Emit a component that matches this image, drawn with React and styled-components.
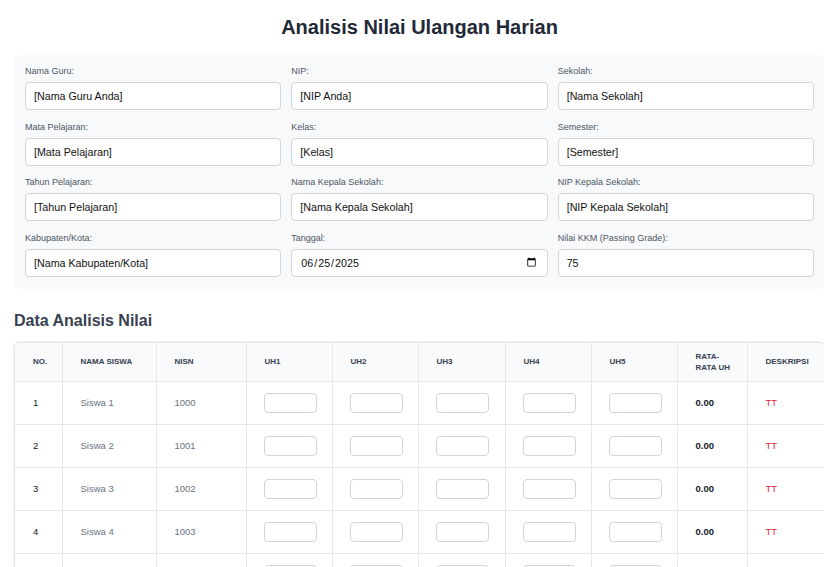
import React from "react";
import styled, { createGlobalStyle } from "styled-components";

const GlobalStyle = createGlobalStyle`
  html, body {
    margin: 0;
    padding: 0;
    background: #ffffff;
    overflow-x: hidden;
  }
  body {
    font-family: "Liberation Sans", Arial, sans-serif;
    color: #1f2937;
  }
`;

const fields = [
  { label: "Nama Guru:", value: "[Nama Guru Anda]" },
  { label: "NIP:", value: "[NIP Anda]" },
  { label: "Sekolah:", value: "[Nama Sekolah]" },
  { label: "Mata Pelajaran:", value: "[Mata Pelajaran]" },
  { label: "Kelas:", value: "[Kelas]" },
  { label: "Semester:", value: "[Semester]" },
  { label: "Tahun Pelajaran:", value: "[Tahun Pelajaran]" },
  { label: "Nama Kepala Sekolah:", value: "[Nama Kepala Sekolah]" },
  { label: "NIP Kepala Sekolah:", value: "[NIP Kepala Sekolah]" },
  { label: "Kabupaten/Kota:", value: "[Nama Kabupaten/Kota]" },
  { label: "Tanggal:", value: "2025-06-25", type: "date" },
  { label: "Nilai KKM (Passing Grade):", value: "75", type: "number" },
];

const columns = [
  { title: "No.", width: 47 },
  { title: "Nama Siswa", width: 94 },
  { title: "NISN", width: 90 },
  { title: "UH1", width: 86 },
  { title: "UH2", width: 86 },
  { title: "UH3", width: 87 },
  { title: "UH4", width: 86 },
  { title: "UH5", width: 86 },
  { title: "Rata-rata UH", width: 70 },
  { title: "Deskripsi", width: 78 },
];

const students = Array.from({ length: 10 }, (_, i) => ({
  no: i + 1,
  name: `Siswa ${i + 1}`,
  nisn: 1000 + i,
}));

function App() {
  return (
    <>
      <GlobalStyle />
      <Page>
        <Title>Analisis Nilai Ulangan Harian</Title>
        <InfoPanel>
          {fields.map((f) => (
            <Field key={f.label}>
              <Label>{f.label}</Label>
              <TextInput type={f.type || "text"} defaultValue={f.value} />
            </Field>
          ))}
        </InfoPanel>

        <SectionTitle>Data Analisis Nilai</SectionTitle>
        <TableWrap>
          <Table>
            <colgroup>
              {columns.map((c) => (
                <col key={c.title} style={{ width: c.width }} />
              ))}
            </colgroup>
            <thead>
              <tr>
                {columns.map((c) => (
                  <HeadCell key={c.title}>{c.title}</HeadCell>
                ))}
              </tr>
            </thead>
            <tbody>
              {students.map((s) => (
                <tr key={s.no}>
                  <Cell>{s.no}</Cell>
                  <Cell muted>{s.name}</Cell>
                  <Cell muted>{s.nisn}</Cell>
                  {[1, 2, 3, 4, 5].map((n) => (
                    <Cell key={n}>
                      <ScoreInput type="text" />
                    </Cell>
                  ))}
                  <Cell bold>0.00</Cell>
                  <Cell danger>TT</Cell>
                </tr>
              ))}
            </tbody>
          </Table>
        </TableWrap>
      </Page>
    </>
  );
}

export default App;

const Page = styled.div`
  width: 811px;
  padding: 0 14px 20px;
`;

const Title = styled.h1`
  margin: 13px 0 14px;
  font-size: 20px;
  line-height: 28px;
  font-weight: 700;
  text-align: center;
  color: #1f2937;
`;

const InfoPanel = styled.div`
  background: #f8f9fa;
  border-radius: 6px;
  padding: 11px 11px 12px;
  display: grid;
  grid-template-columns: repeat(3, 1fr);
  column-gap: 10px;
  row-gap: 11.5px;
`;

const Field = styled.div`
  display: flex;
  flex-direction: column;
`;

const Label = styled.label`
  font-size: 9px;
  line-height: 11px;
  color: #4b5563;
  margin-bottom: 5px;
`;

const TextInput = styled.input`
  box-sizing: border-box;
  height: 28px;
  width: 100%;
  padding: 0 8px;
  border: 1px solid #d1d5db;
  border-radius: 4px;
  background: #ffffff;
  font-family: "Liberation Sans", Arial, sans-serif;
  font-size: 10.7px;
  color: #111111;
  outline: none;
`;

const SectionTitle = styled.h2`
  margin: 22px 0 11px;
  font-size: 16px;
  line-height: 20px;
  font-weight: 700;
  color: #374151;
`;

const TableWrap = styled.div`
  border: 1px solid #e5e7eb;
  border-radius: 6px;
  overflow: hidden;
  box-shadow: 0 0 0 1px #eef0f3;
`;

const Table = styled.table`
  width: 100%;
  table-layout: fixed;
  border-collapse: collapse;
`;

const HeadCell = styled.th`
  background: #f9fafb;
  padding: 8px 10px 8px 18px;
  font-size: 8px;
  line-height: 11px;
  font-weight: 700;
  text-transform: uppercase;
  text-align: left;
  color: #374151;
  border-right: 1px solid #e5e7eb;
  border-bottom: 1px solid #e5e7eb;
  height: 21px;
`;

const Cell = styled.td`
  padding: 11px 18px;
  height: 20px;
  font-size: 9.5px;
  text-align: left;
  border-right: 1px solid #e5e7eb;
  border-bottom: 1px solid #e5e7eb;
  color: ${(p) => (p.danger ? "#dc2640" : p.muted ? "#6b7280" : "#111827")};
  font-weight: ${(p) => (p.bold ? 700 : 400)};
`;

const ScoreInput = styled.input`
  box-sizing: border-box;
  display: block;
  width: 53px;
  height: 20px;
  margin-left: -1px;
  border: 1px solid #d1d5db;
  border-radius: 4px;
  background: #ffffff;
  outline: none;
`;
